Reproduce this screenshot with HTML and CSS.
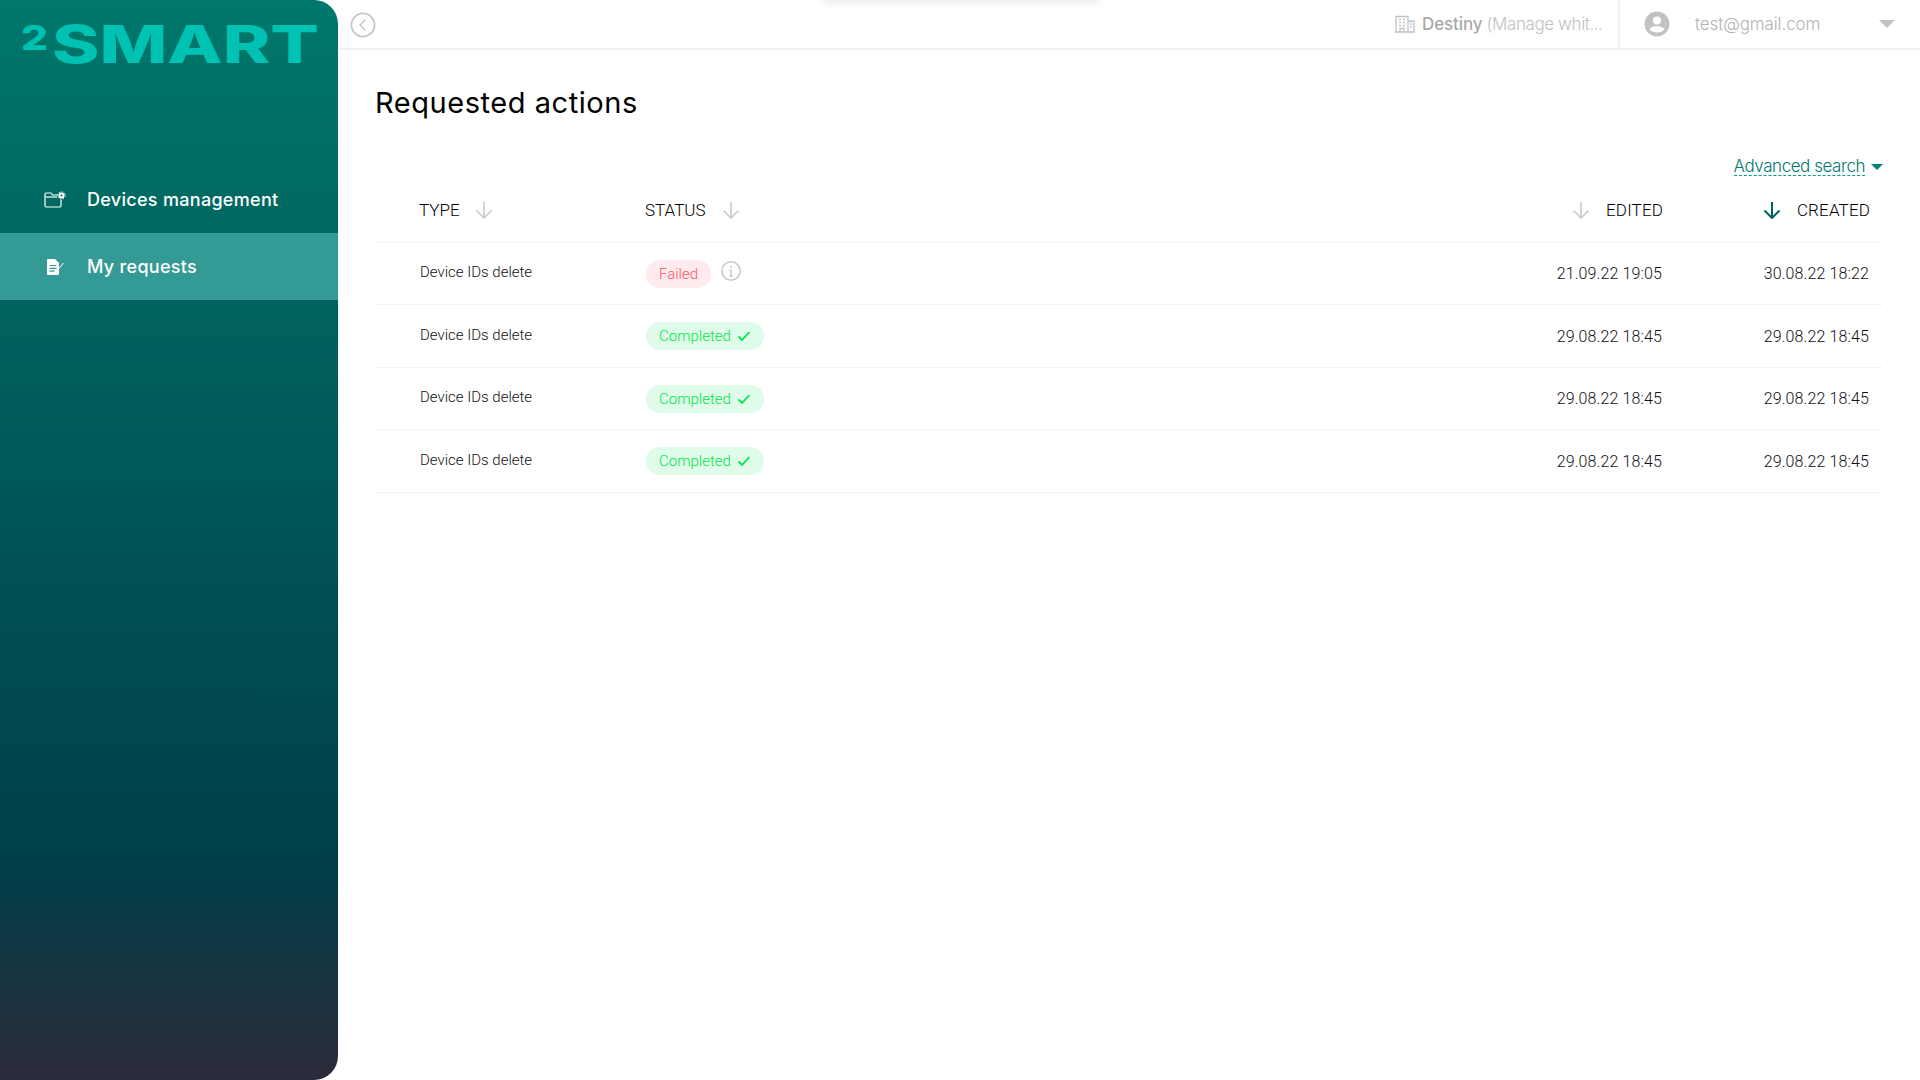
FILE: index.html
```html
<!DOCTYPE html>
<html lang="en">
<head>
<meta charset="utf-8">
<title>Requested actions</title>
<link rel="stylesheet" href="styles.css">
</head>
<body>
<div class="app">
  <aside class="sidebar">
    <div class="logo">
      <svg width="300" height="76" viewBox="0 0 300 76" class="logo-svg">
        <text x="0" y="40" class="logo-two" textLength="27" lengthAdjust="spacingAndGlyphs">2</text>
        <text x="31" y="53" class="logo-word" textLength="267" lengthAdjust="spacingAndGlyphs">SMART</text>
      </svg>
    </div>
    <nav class="nav">
      <a class="nav-item">
        <svg class="nav-icon" width="22" height="18" viewBox="0 0 22 18" fill="none" stroke="#fff" stroke-width="1.2">
          <path d="M14 4H8.5L7 2H2.2C1.5 2 1 2.5 1 3.2V14.8C1 15.5 1.5 16 2.2 16H15.8C16.5 16 17 15.5 17 14.8V9"/>
          <path d="M1 6H13"/>
          <circle cx="17.5" cy="4.5" r="2" stroke-width="2"/>
          <circle cx="17.5" cy="4.5" r="3.6" stroke-width="1" stroke-dasharray="1.5 1.3"/>
        </svg>
        <span>Devices management</span>
      </a>
      <a class="nav-item active">
        <svg class="nav-icon" width="22" height="18" viewBox="0 0 22 18">
          <path d="M4 1H11L15 5V16C15 16.600 14.600 17 14 17H4C3.400 17 3 16.600 3 16V2C3 1.400 3.400 1 4 1Z" fill="#fff"/>
          <path d="M5.500 7.500H12.500M5.500 10.300H12.500M5.500 13.100H10.500" stroke="#3a9a94" stroke-width="1.200"/>
          <path d="M14.500 11L19.500 5" stroke="#fff" stroke-width="1"/>
        </svg>
        <span>My requests</span>
      </a>
    </nav>
  </aside>

  <main class="main">
    <header class="topbar">
      <svg class="back-icon" width="26" height="26" viewBox="0 0 26 26" fill="none" stroke="#c6c6c6" stroke-width="1.800">
        <circle cx="13" cy="13" r="11.600"/>
        <path d="M15.500 7.500L10 13L15.500 18.500" stroke-width="1.400"/>
      </svg>
      <div class="org">
        <svg class="org-icon" width="20" height="18" viewBox="0 0 20 18" fill="none" stroke="#c2c2c2" stroke-width="1.300">
          <path d="M1 17V1.500H13V17M13 6H19V17M0 17H20"/>
          <path d="M4 4.500H6M8 4.500H10M4 7.500H6M8 7.500H10M4 10.500H6M8 10.500H10M15 9H17M15 12H17" stroke-width="1.600"/>
          <path d="M5 17V13.500H9V17"/>
        </svg>
        <span class="org-name">Destiny</span>
        <span class="org-sub">(Manage whit...</span>
      </div>
      <div class="user">
        <svg class="user-icon" width="26" height="26" viewBox="0 0 26 26">
          <circle cx="13" cy="13" r="12.500" fill="#c2c2c2"/>
          <circle cx="13" cy="9.500" r="4" fill="#fff"/>
          <path d="M5.500 18.500C7 15.800 10 15 13 15C16 15 19 15.800 20.500 18.500C18.800 20.500 16 21.500 13 21.500C10 21.500 7.200 20.500 5.500 18.500Z" fill="#fff"/>
        </svg>
        <span class="user-mail">test@gmail.com</span>
        <span class="user-caret"></span>
      </div>
    </header>

    <div class="ghost-shadow"></div>

    <section class="content">
      <h1 class="title">Requested actions</h1>
      <div class="search-row">
        <a class="adv-search">Advanced search</a>
        <span class="adv-caret"></span>
      </div>

      <div class="table">
        <div class="row head">
          <div class="cell"><span>TYPE</span>
            <svg class="arrow" width="18" height="18" viewBox="0 0 18 18"><path d="M9 1V16.500M1.500 9.500L9 17L16.500 9.500"/></svg>
          </div>
          <div class="cell"><span>STATUS</span>
            <svg class="arrow" width="18" height="18" viewBox="0 0 18 18"><path d="M9 1V16.500M1.500 9.500L9 17L16.500 9.500"/></svg>
          </div>
          <div class="cell end">
            <svg class="arrow" width="18" height="18" viewBox="0 0 18 18"><path d="M9 1V16.500M1.500 9.500L9 17L16.500 9.500"/></svg>
            <span>EDITED</span>
          </div>
          <div class="cell end">
            <svg class="arrow on" width="18" height="18" viewBox="0 0 18 18"><path d="M9 1V16.500M1.500 9.500L9 17L16.500 9.500"/></svg>
            <span>CREATED</span>
          </div>
        </div>

        <div class="row">
          <div class="cell type">Device IDs delete</div>
          <div class="cell">
            <span class="chip failed">Failed</span>
            <svg class="info" width="22" height="22" viewBox="0 0 22 22" fill="none" stroke="#c6c6c6" stroke-width="1.500">
              <circle cx="11" cy="11" r="9.200"/>
              <path d="M11 10V16M9.500 10H11M9.500 16H12.500"/>
              <path d="M11 6V7.600" stroke-width="2"/>
            </svg>
          </div>
          <div class="cell end date">21.09.22 19:05</div>
          <div class="cell end date">30.08.22 18:22</div>
        </div>

        <div class="row">
          <div class="cell type">Device IDs delete</div>
          <div class="cell">
            <span class="chip done">Completed
              <svg width="14" height="12" viewBox="0 0 14 12" fill="none" stroke="#00e64a" stroke-width="1.800"><path d="M1.500 6.500L5 10L12.500 2"/></svg>
            </span>
          </div>
          <div class="cell end date">29.08.22 18:45</div>
          <div class="cell end date">29.08.22 18:45</div>
        </div>

        <div class="row">
          <div class="cell type">Device IDs delete</div>
          <div class="cell">
            <span class="chip done">Completed
              <svg width="14" height="12" viewBox="0 0 14 12" fill="none" stroke="#00e64a" stroke-width="1.800"><path d="M1.500 6.500L5 10L12.500 2"/></svg>
            </span>
          </div>
          <div class="cell end date">29.08.22 18:45</div>
          <div class="cell end date">29.08.22 18:45</div>
        </div>

        <div class="row">
          <div class="cell type">Device IDs delete</div>
          <div class="cell">
            <span class="chip done">Completed
              <svg width="14" height="12" viewBox="0 0 14 12" fill="none" stroke="#00e64a" stroke-width="1.800"><path d="M1.500 6.500L5 10L12.500 2"/></svg>
            </span>
          </div>
          <div class="cell end date">29.08.22 18:45</div>
          <div class="cell end date">29.08.22 18:45</div>
        </div>
      </div>
    </section>
  </main>
</div>
</body>
</html>
```

FILE: styles.css
```css
* { box-sizing: border-box; }

html, body {
  margin: 0;
  height: 100%;
  background: #fff;
  overflow: hidden;
}

body {
  font-family: "Inter", "Liberation Sans", sans-serif;
  color: #000;
}

.app {
  display: flex;
  height: 100vh;
}

/* Sidebar */
.sidebar {
  flex: 0 0 338px;
  height: 100%;
  border-radius: 0 24px 24px 0;
  background: linear-gradient(180deg, #00786b 0%, #00615d 30%, #003f49 80%, #2b2a3a 100%);
}

.logo {
  height: 166px;
  padding: 10px 0 0 21px;
}

.logo-svg { display: block; }

.logo-two {
  font-family: "Inter", sans-serif;
  font-weight: 800;
  font-size: 34px;
  fill: #00c2b2;
}

.logo-word {
  font-family: "Inter", sans-serif;
  font-weight: 800;
  font-size: 52px;
  fill: #00c2b2;
}

.nav { display: flex; flex-direction: column; }

.nav-item {
  height: 67px;
  display: flex;
  align-items: center;
  gap: 21px;
  padding-left: 44px;
  color: #fff;
  font-size: 18px;
  font-weight: 500;
  letter-spacing: 0.3px;
}

.nav-item.active { background: #339a95; }

.nav-icon { flex: none; }

/* Main */
.main {
  flex: 1;
  min-width: 0;
  display: flex;
  flex-direction: column;
  position: relative;
}

.topbar {
  height: 50px;
  flex: none;
  display: flex;
  align-items: center;
  border-bottom: 2px solid #f1f1f1;
  padding-left: 12px;
}

.back-icon { flex: none; margin-top: 2px; }

.org {
  margin-left: auto;
  display: flex;
  align-items: center;
  width: 223px;
  height: 100%;
  flex: none;
  font-size: 17px;
  white-space: nowrap;
}

.org-icon { flex: none; }

.org-name {
  color: #a9a9a9;
  font-weight: 500;
  margin-left: 7px;
  letter-spacing: -0.1px;
}

.org-sub {
  color: #c2c2c2;
  font-weight: 300;
  margin-left: 4px;
  letter-spacing: -0.4px;
}

.user {
  flex: none;
  width: 302px;
  height: 100%;
  display: flex;
  align-items: center;
  border-left: 2px solid #f1f1f1;
  padding-left: 24px;
}

.user-icon { flex: none; }

.user-mail {
  margin-left: 25px;
  font-size: 17px;
  font-weight: 300;
  letter-spacing: -0.1px;
  color: #b3b3b3;
}

.user-caret {
  margin-left: auto;
  margin-right: 25px;
  width: 0;
  height: 0;
  border-left: 8px solid transparent;
  border-right: 8px solid transparent;
  border-top: 8px solid #c2c2c2;
}

.ghost-shadow {
  position: absolute;
  top: -8px;
  left: 484px;
  width: 278px;
  height: 8px;
  box-shadow: 0 2px 8px rgba(0, 0, 0, 0.1);
}

.content { padding: 0 37px; }

.title {
  margin: 33px 0 0;
  height: 40px;
  line-height: 40px;
  font-size: 29px;
  font-weight: 400;
  letter-spacing: 0.55px;
}

.search-row {
  margin-top: 34px;
  height: 20px;
  display: flex;
  align-items: center;
  justify-content: flex-end;
  gap: 6px;
}

.adv-search {
  font-size: 17px;
  font-weight: 300;
  letter-spacing: -0.45px;
  color: #00786f;
  border-bottom: 1px dashed #00a191;
  line-height: 17px;
}

.adv-caret {
  width: 0;
  height: 0;
  border-left: 6.500px solid transparent;
  border-right: 6.500px solid transparent;
  border-top: 6px solid #00857a;
}

/* Table */
.row {
  display: grid;
  grid-template-columns: 270px 1fr 200px 220px;
  height: 62.5px;
  border-bottom: 1px solid #f4f4f4;
  font-family: "Roboto", sans-serif;
}

.row.head {
  height: 65.9px;
  padding-top: 2px;
  font-size: 17px;
  font-weight: 300;
  color: #000;
}

.cell {
  display: flex;
  align-items: center;
  min-width: 0;
}

.cell:first-child { padding-left: 45px; }
.row.head .cell:first-child { padding-left: 44px; gap: 15px; }
.cell.end { justify-content: flex-end; }
.cell.end:last-child { padding-right: 13px; }
.row:not(.head) .cell.end:last-child { padding-right: 14px; }

.head .cell { gap: 16px; }
.head .cell.end { letter-spacing: 0.15px; }

.arrow {
  flex: none;
  fill: none;
  stroke: #cbcbcb;
  stroke-width: 1.600;
}

.arrow.on { stroke: #00665d; stroke-width: 2; }

.type {
  font-size: 15px;
  font-weight: 300;
  color: #111;
  padding-bottom: 3px;
}

.date {
  font-size: 16px;
  font-weight: 300;
  letter-spacing: 0.12px;
  color: #111;
  padding-right: 1px;
}

.chip {
  display: inline-flex;
  align-items: center;
  gap: 6px;
  height: 28px;
  margin-left: 1px;
  padding: 0 13px;
  border-radius: 14px;
  font-size: 15px;
  font-weight: 300;
  white-space: nowrap;
}

.chip.failed { background: #ffebed; color: #ff5268; }
.chip.done { background: #dffbe9; color: #00e64a; }

.info { margin-left: 9px; flex: none; margin-top: -5px; }
```
